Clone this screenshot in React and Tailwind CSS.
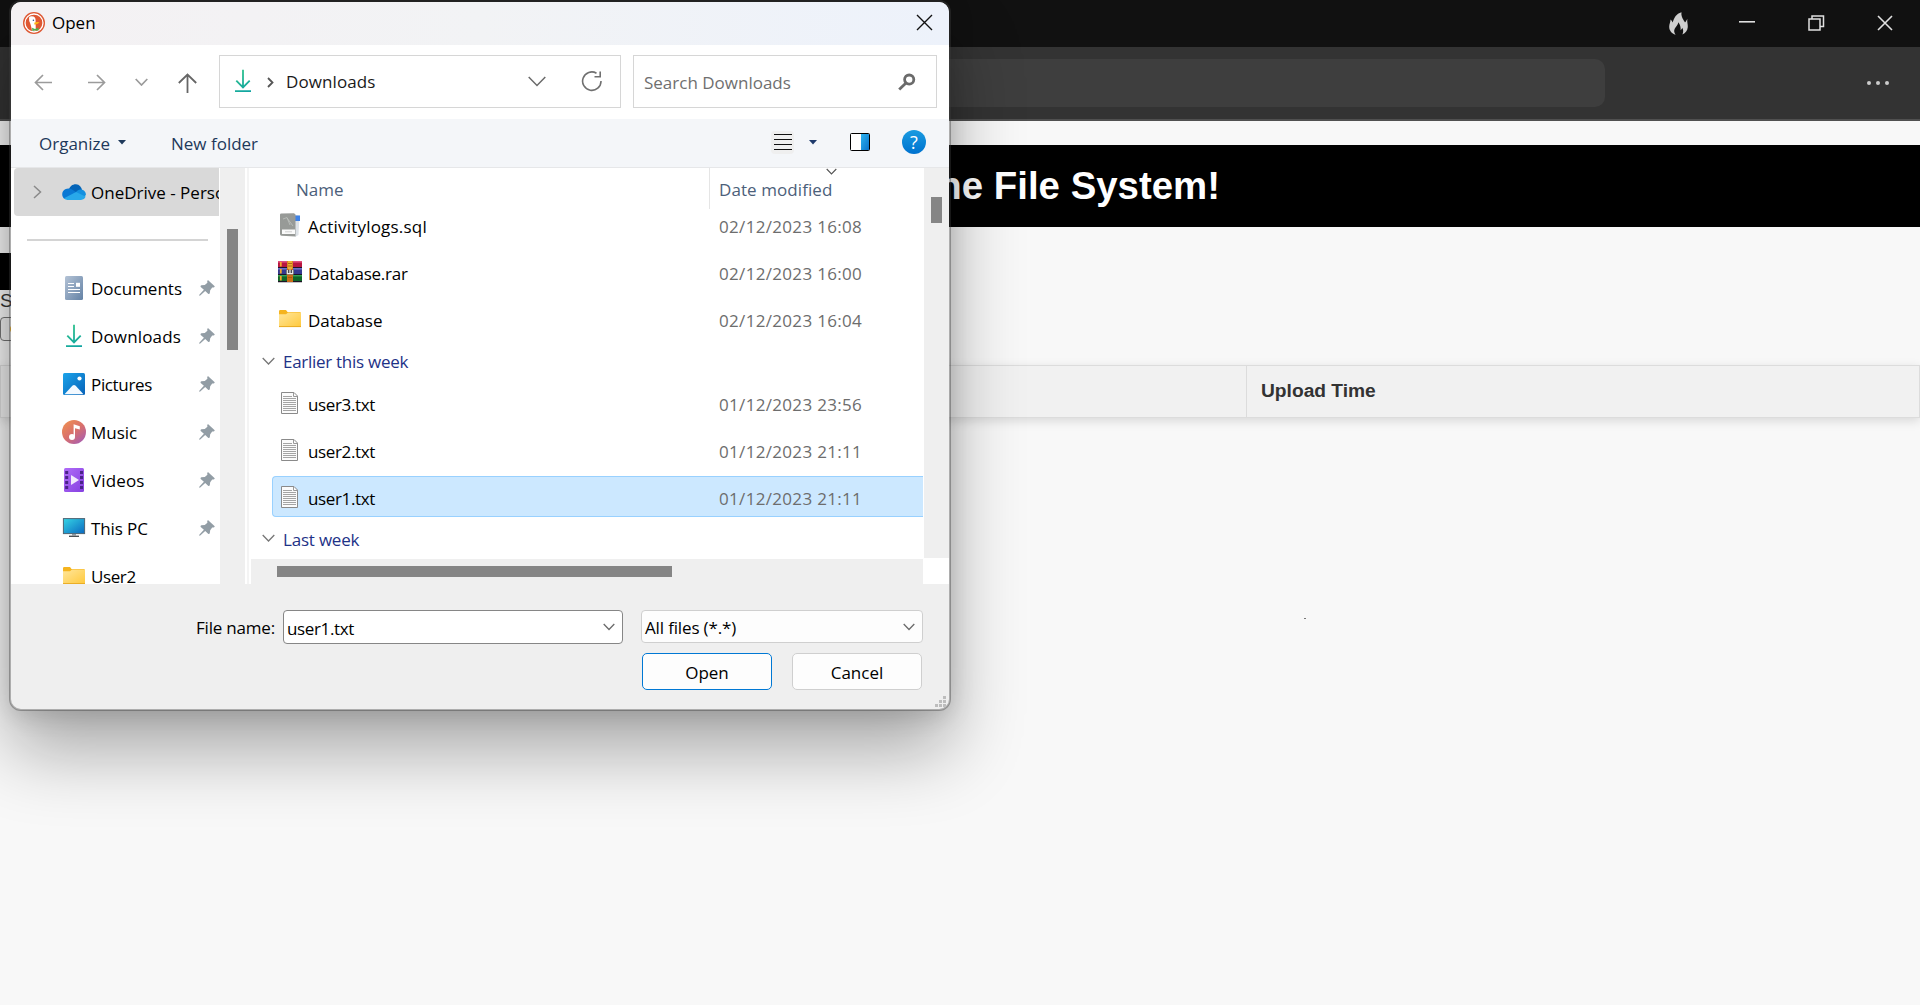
import React from "react";

const UI = "font-['Open_Sans','Noto_Sans',sans-serif]";

function Chevron({ w = 12, color = "#6b6b6b", sw = 1.3 }) {
  return (
    <svg width={w} height={w / 2 + 2} viewBox={`0 0 ${w} ${w / 2 + 2}`} fill="none" stroke={color} strokeWidth={sw}>
      <path d={`M.7 1 L${w / 2} ${w / 2 + 0.5} L${w - 0.7} 1`} />
    </svg>
  );
}

function DownloadIcon() {
  return (
    <svg width="24" height="24" viewBox="0 0 24 24" fill="none" strokeWidth="1.8">
      <defs>
        <linearGradient id="dl" gradientUnits="userSpaceOnUse" x1="6" y1="0" x2="18" y2="24">
          <stop offset="0" stopColor="#31c48a" />
          <stop offset="1" stopColor="#0fa3a3" />
        </linearGradient>
      </defs>
      <path d="M12 .8V18M5.3 11.7 12 18.4 18.7 11.7M4 22.2H20" stroke="url(#dl)" />
    </svg>
  );
}

function CloudIcon() {
  return (
    <svg width="24" height="24" viewBox="0 0 24 24">
      <path d="M6.5 10.5C7.5 6 11 4 14 4.2 17.5 4.5 19.5 7 20 10L15 15 7 12Z" fill="#0364b8" />
      <path d="M.3 15.2C-.2 11.5 2.5 8.7 6.2 8.6 8.5 8.6 10.5 9.7 14 12L8 18.5 2.5 18.8C1.3 18 .5 16.8.3 15.2Z" fill="#0a78d4" />
      <path d="M14 12C16 9.6 19 9.3 20.3 9.7 22.7 10.5 24 12.7 23.9 15L21 18 13.5 14Z" fill="#1490df" />
      <path d="M2 18.3 14 12 23.6 16.6C22.8 18.8 21.3 19.9 19 19.9H5.6C4.2 19.9 2.8 19.3 2 18.3Z" fill="#28a8ea" />
    </svg>
  );
}

function DocumentsIcon() {
  return (
    <svg width="24" height="24" viewBox="0 0 24 24">
      <defs>
        <linearGradient id="doc" x1="0" y1="0" x2="1" y2="1">
          <stop offset="0" stopColor="#b4c3d6" />
          <stop offset="1" stopColor="#6482a5" />
        </linearGradient>
      </defs>
      <rect x="3" y="0" width="18" height="24" rx="1.5" fill="url(#doc)" />
      <path d="M6 7.5H12M6 10.5H12M6 13.5H18M6 16.5H18" stroke="#fff" strokeWidth="1.1" />
      <rect x="14" y="6.8" width="4" height="4" fill="#fff" />
    </svg>
  );
}

function PicturesIcon() {
  return (
    <svg width="24" height="24" viewBox="0 0 24 24">
      <defs>
        <linearGradient id="pic" x1="0" y1="0" x2="1" y2="1">
          <stop offset="0" stopColor="#1ba4ea" />
          <stop offset="1" stopColor="#0762b8" />
        </linearGradient>
      </defs>
      <rect x="1" y="1" width="22" height="22" rx="1.5" fill="url(#pic)" />
      <path d="M2.5 22.2 10.6 13.6Q12 12.2 13.4 13.6L21.5 22.2Z" fill="#f3f9ff" />
      <circle cx="17.5" cy="6.5" r="2.1" fill="#fff" />
    </svg>
  );
}

function MusicIcon() {
  return (
    <svg width="24" height="24" viewBox="0 0 24 24">
      <defs>
        <linearGradient id="mus" x1="0.1" y1="0" x2="0.9" y2="1">
          <stop offset="0" stopColor="#f09050" />
          <stop offset="0.5" stopColor="#d9706c" />
          <stop offset="1" stopColor="#a35cb8" />
        </linearGradient>
      </defs>
      <circle cx="12" cy="12" r="12" fill="url(#mus)" />
      <circle cx="10" cy="17" r="3" fill="#fff" />
      <path d="M11.6 17V4.2L17.8 6.2V9.4L13 8.2V17Z" fill="#fff" />
    </svg>
  );
}

function VideosIcon() {
  return (
    <svg width="24" height="24" viewBox="0 0 24 24">
      <defs>
        <linearGradient id="vid" x1="0" y1="0" x2="1" y2="1">
          <stop offset="0" stopColor="#b06cf8" />
          <stop offset="1" stopColor="#8540e0" />
        </linearGradient>
      </defs>
      <rect x="2" y="0" width="20" height="24" rx="1.5" fill="url(#vid)" />
      {[3, 8, 13, 18].map((y) => (
        <g key={y} fill="#4a2488">
          <rect x="3.2" y={y} width="3" height="3" />
          <rect x="18" y={y} width="3" height="3" />
        </g>
      ))}
      <path d="M9 7 17 12 9 17Z" fill="#f2eafc" />
    </svg>
  );
}

function PcIcon() {
  return (
    <svg width="24" height="24" viewBox="0 0 24 24">
      <defs>
        <linearGradient id="pc" x1="0" y1="0" x2="1" y2="1">
          <stop offset="0" stopColor="#35d5e5" />
          <stop offset="1" stopColor="#0a68c0" />
        </linearGradient>
      </defs>
      <rect x="1.4" y="2.6" width="21.2" height="15" fill="url(#pc)" stroke="#4d6473" />
      <path d="M10 18H14V19.5H10Z" fill="#8d9aa3" />
      <path d="M7 20.3H17" stroke="#4a4f54" strokeWidth="1.4" />
    </svg>
  );
}

function FolderIcon() {
  return (
    <svg width="24" height="24" viewBox="0 0 24 24">
      <defs>
        <linearGradient id="fold" x1="0" y1="0" x2="1" y2="1">
          <stop offset="0" stopColor="#ffe69b" />
          <stop offset="1" stopColor="#ffc93c" />
        </linearGradient>
      </defs>
      <path d="M1 4.2Q1 3 2.2 3H8L9.5 5H22.5V8H1Z" fill="#f5b41e" />
      <path d="M1 7.2H8L10 5.6H23V20H1Z" fill="url(#fold)" />
      <path d="M1 19.6H23" stroke="#e9ab22" />
    </svg>
  );
}

function SqlIcon() {
  return (
    <svg width="24" height="24" viewBox="0 0 24 24">
      <path d="M15 1.5 21.5 2.5 20.5 22 17 24Z" fill="#dde2e7" />
      <path d="M17 2.5H22V8H17Z" fill="#3f83e8" />
      <path d="M2 1.8Q2 .6 3.2.5L16 .2 17.5 1.5V23.5L3.5 22.8Q2 22.6 2 21Z" fill="#979a97" />
      <path d="M5 6 9 4.5 12 12M9 5 15 13" stroke="#c3c7c3" strokeWidth=".7" fill="none" />
      <rect x="4" y="16.5" width="13" height="4.5" fill="#fafafa" />
      <path d="M7 18.8H14" stroke="#ccc" strokeWidth=".9" />
    </svg>
  );
}

function RarIcon() {
  return (
    <svg width="24" height="24" viewBox="0 0 24 24">
      <rect y="1" width="24" height="7" fill="#b81440" />
      <rect y="1" width="24" height="1.6" fill="#e0507c" />
      <rect y="8" width="24" height="7" fill="#343990" />
      <rect y="8" width="24" height="1.6" fill="#6b70c8" />
      <rect y="15" width="24" height="7" fill="#0f6628" />
      <rect y="15" width="24" height="1.4" fill="#37a355" />
      <path d="M0 7.5H24M0 14.5H24M0 21.6H24" stroke="#1d1426" strokeWidth="1.1" />
      <path d="M2.8 2V6.5M2.8 9V13.5M2.8 16V20.5" stroke="#f2a72c" strokeWidth="1.8" />
      <rect x="9" y="1" width="6" height="21" fill="#c96c16" />
      <rect x="9.6" y="1" width="4.8" height="8" fill="#eeb032" />
      <path d="M10 3.5H14M10 6H14M10 17.5H14" stroke="#a0520f" strokeWidth=".8" />
      <rect x="8" y="10" width="8" height="4.6" fill="#4c4a4a" />
      <path d="M9.3 10V13.6H14.7V10M12 9.5V13" stroke="#eee" strokeWidth="1.2" fill="none" />
    </svg>
  );
}

function TxtIcon() {
  return (
    <svg width="24" height="24" viewBox="0 0 24 24">
      <path d="M3.5 1.5H16L19.5 5V22.5H3.5Z" fill="#fbfbfb" stroke="#8a8a8a" />
      <path d="M15.5 1.5V5.5H19.5" fill="none" stroke="#9a9a9a" />
      <path d="M5 5.5H14M5 7.5H18M5 9.5H18M5 11.5H18M5 13.5H18M5 15.5H18M5 17.5H18M5 19.5H18" stroke="#a4a4a4" />
    </svg>
  );
}

function PinIcon() {
  return (
    <svg width="16" height="16" viewBox="0 0 16 16" fill="#929da5">
      <path d="M9.2.3 15.7 6.3Q15.8 7.4 14.6 7.5L13.2 7.4 11.2 10.2 10.8 13.3Q10.2 14.6 9.1 13.8L6.2 11 1.2 15.6.2 15.8.3 14.7 4.9 9.8 1.7 6.9Q1 5.8 2.3 5.2L5.8 4.9 8.4 2.7 8.2 1.2Q8.3.2 9.2.3Z" />
    </svg>
  );
}

function DuckIcon() {
  return (
    <svg width="22" height="22" viewBox="0 0 22 22">
      <circle cx="11" cy="11" r="11" fill="#de5833" />
      <circle cx="11" cy="11" r="9" fill="none" stroke="#fff" strokeWidth="1.3" />
      <path d="M6 5.5Q7.5 3.5 10.5 4.6 13 5.5 12.6 10L12.8 18.6Q11 19.4 9 18.6 7.8 12 6.2 9Z" fill="#fff" />
      <path d="M11.2 10.8Q13.5 9.5 16.6 10.2 15.5 12 11.6 12.8Z" fill="#fdb515" />
      <path d="M9 15.8 12 17 15.5 15.8V18.4L12 18.4 9.4 19Z" fill="#4caf50" />
      <circle cx="10.4" cy="8.2" r=".8" fill="#2d4f8e" />
    </svg>
  );
}

const pinned = [
  ["Documents", DocumentsIcon, "tracking-normal"],
  ["Downloads", DownloadIcon, "tracking-[0.15px]"],
  ["Pictures", PicturesIcon, "tracking-[-0.35px]"],
  ["Music", MusicIcon, "tracking-normal"],
  ["Videos", VideosIcon, "tracking-[0.15px]"],
  ["This PC", PcIcon, "tracking-[-0.1px]"],
];

function FileRow({ icon: Icon, name, date, selected, tracking, shift }) {
  return (
    <div className="flex h-[47px] items-center pl-[23px]">
      <div
        className={
          "flex h-[41px] w-[651px] items-center rounded-l-sm border border-r-0 " +
          (selected ? "border-[#99d1ff] bg-[#cce8ff]" : "border-transparent")
        }
      >
        <div className={"flex items-center " + shift}>
          <div className="ml-[5px] h-6 w-6 -translate-y-[2px]"><Icon /></div>
          <div className={"ml-[6px] w-[411px] text-black " + tracking}>{name}</div>
          <div className="tracking-[0.32px] text-[#6d6d6d]">{date}</div>
        </div>
      </div>
    </div>
  );
}

function Group({ label, className }) {
  return (
    <div className={"flex items-center pl-[13px] text-[#1e3287] " + className}>
      <div className="-mt-[2px]"><Chevron w={13} color="#767676" /></div>
      <span className="ml-2">{label}</span>
    </div>
  );
}

function Dialog() {
  return (
    <div
      className={
        UI +
        " absolute left-[9px] top-0 flex h-[711px] w-[942px] flex-col overflow-hidden whitespace-nowrap rounded-[12px] border-2 border-[#3c3c3c]/40 bg-[#efefef] bg-clip-padding text-[17px] leading-6 shadow-[0_40px_72px_rgba(0,0,0,0.32),0_4px_24px_rgba(0,0,0,0.14)]"
      }
    >
      <div className="flex h-[43px] shrink-0 items-center bg-linear-to-r from-[#f4f1f3] via-[#f2f3f5] to-[#edf2fb] pb-[2px] pl-3 pr-4">
        <DuckIcon />
        <span className="ml-[7px] text-black">Open</span>
        <svg className="ml-auto" width="17" height="17" viewBox="0 0 17 17" stroke="#111" strokeWidth="1.4">
          <path d="M1 1 16 16M16 1 1 16" />
        </svg>
      </div>

      <div className="flex h-[74px] shrink-0 items-center bg-white">
        <svg className="ml-[23px]" width="18" height="17" viewBox="0 0 18 17" fill="none" stroke="#9b9b9b" strokeWidth="1.7">
          <path d="M18 8.5H1.5M9 1 1.5 8.5 9 16" />
        </svg>
        <svg className="ml-[36px]" width="18" height="17" viewBox="0 0 18 17" fill="none" stroke="#9b9b9b" strokeWidth="1.7">
          <path d="M0 8.5H16.5M9 1 16.5 8.5 9 16" />
        </svg>
        <div className="ml-[29px]"><Chevron w={13} color="#9b9b9b" sw={1.7} /></div>
        <svg className="ml-[30px] mt-[2px]" width="19" height="20" viewBox="0 0 19 20" fill="none" stroke="#666" strokeWidth="1.8">
          <path d="M9.5 20V1.5M.8 10 9.5 1.5 18.2 10" />
        </svg>
        <div className="ml-[22px] flex h-[53px] w-[402px] -translate-y-[1px] items-center border border-[#d6d6d6]">
          <div className="ml-[11px]"><DownloadIcon /></div>
          <svg className="ml-[12px] mt-[3px]" width="8" height="11" viewBox="0 0 8 11" fill="none" stroke="#555" strokeWidth="1.8">
            <path d="M1 1 5.5 5.5 1 10" />
          </svg>
          <span className="ml-[11px] w-[242px] pt-[2px] tracking-[0.1px] text-[#1a1a1a]">Downloads</span>
          <Chevron w={18} color="#6b6b6b" sw={1.5} />
          <svg className="ml-[35px]" width="22" height="22" viewBox="0 0 22 22" fill="none" stroke="#707070" strokeWidth="1.6">
            <path d="M15.5 3.2A9.2 9.2 0 1 0 20 11M19.2 1.5V6.8H13.5" />
          </svg>
        </div>
        <div className="ml-3 flex h-[53px] w-[304px] -translate-y-[1px] items-center border border-[#d6d6d6] pl-[10px]">
          <span className="pt-[3px] text-[#6f6f6f]">Search Downloads</span>
          <svg className="ml-auto mr-[20px] mt-[2px]" width="18" height="18" viewBox="0 0 18 18" fill="none" stroke="#6b6b6b">
            <circle cx="11.2" cy="6.6" r="4.6" strokeWidth="2.8" />
            <path d="M8 10 1.2 16.6" strokeWidth="2.8" />
          </svg>
        </div>
      </div>

      <div className="flex h-[49px] shrink-0 items-center border-b border-[#e6e7e9] bg-[#f4f6f9] text-[#1e395b]">
        <span className="ml-[28px] w-[71px] pt-[2px]">Organize</span>
        <svg className="-mt-[2px] ml-[8px]" width="8" height="5" viewBox="0 0 8 5" fill="#1e395b"><path d="M0 0H8L4 4.6Z" /></svg>
        <span className="ml-[45px] w-[88px] pt-[2px]">New folder</span>
        <div className="-mt-[2px] ml-[512px] flex h-[23px] w-[23px] items-center justify-center rounded bg-[#efefef]">
          <svg width="18" height="16" viewBox="0 0 18 16" stroke="#111"><path d="M0 .5H18M0 5.5H18M0 10.5H18M0 15.5H18" /></svg>
        </div>
        <svg className="-mt-[2px] ml-[15px]" width="8" height="5" viewBox="0 0 8 5" fill="#1e3a6b"><path d="M0 0H8L4 4.6Z" /></svg>
        <svg className="-mt-[2px] ml-[33px]" width="20" height="18" viewBox="0 0 20 18">
          <defs>
            <linearGradient id="pane" x1="0" y1="0" x2="1" y2="1">
              <stop offset="0" stopColor="#2cb4f0" /><stop offset="1" stopColor="#0a72cc" />
            </linearGradient>
          </defs>
          <rect x=".5" y=".5" width="19" height="17" rx="1" fill="#fff" stroke="#000" />
          <rect x="11" y="1" width="8" height="16" fill="url(#pane)" />
        </svg>
        <div className="-mt-[2px] ml-[32px] flex h-6 w-6 items-center justify-center rounded-full bg-linear-to-b from-[#1b9be0] to-[#0072cf] text-[18px] text-white">?</div>
      </div>

      <div className="flex h-[416px] shrink-0 overflow-hidden bg-white text-black">
        <div className="h-full w-[209px] overflow-hidden">
          <div className="ml-[3px] flex h-12 w-[205px] items-center overflow-hidden rounded-l-sm bg-[#d9d9d9]">
            <svg className="ml-[19px] shrink-0" width="9" height="14" viewBox="0 0 9 14" fill="none" stroke="#8a8a8a" strokeWidth="1.5">
              <path d="M1 1 7.5 7 1 13" />
            </svg>
            <div className="ml-[20px] shrink-0"><CloudIcon /></div>
            <span className="ml-[5px] pt-[2px]">OneDrive - Personal</span>
          </div>
          <div className="flex h-12 items-center pl-[16px]"><div className="h-[2px] w-[181px] bg-[#d4d4d4]" /></div>
          {pinned.map(([name, Icon, tracking]) => (
            <div key={name} className="flex h-12 items-center pl-[51px]">
              <Icon />
              <span className={"ml-[5px] w-[108px] pt-[2px] " + tracking}>{name}</span>
              <PinIcon />
            </div>
          ))}
          <div className="flex h-12 items-center pl-[51px]">
            <FolderIcon />
            <span className="ml-[5px] pt-[2px] tracking-[-0.4px]">User2</span>
          </div>
        </div>
        <div className="w-[25px] bg-[#efefef] pl-[7px] pt-[61px]"><div className="h-[121px] w-[11px] bg-[#858585]" /></div>
        <div className="ml-[2px] w-[2px] bg-[#f4f4f4]" />
        <div className="flex w-[674px] flex-col">
          <div className="flex h-[36px] shrink-0 text-[#4c607a]">
            <div className="w-[460px] pl-[47px] pt-[10px]">Name</div>
            <div className="relative h-[41px] border-l border-[#e5e5e5] pl-[9px] pt-[10px] tracking-[0.08px]">
              Date modified
              <div className="absolute left-[116px] top-0"><Chevron w={11} color="#555" sw={1.1} /></div>
            </div>
          </div>
          <FileRow icon={SqlIcon} name="Activitylogs.sql" date="02/12/2023 16:08" tracking="tracking-[0.2px]" shift="-translate-y-px" />
          <FileRow icon={RarIcon} name="Database.rar" date="02/12/2023 16:00" tracking="tracking-[-0.25px]" shift="-translate-y-px" />
          <FileRow icon={FolderIcon} name="Database" date="02/12/2023 16:04" tracking="tracking-[-0.05px]" shift="-translate-y-px" />
          <Group label="Earlier this week" className="h-[34px] tracking-[-0.28px]" />
          <FileRow icon={TxtIcon} name="user3.txt" date="01/12/2023 23:56" tracking="tracking-[-0.35px]" shift="translate-y-[2px]" />
          <FileRow icon={TxtIcon} name="user2.txt" date="01/12/2023 21:11" tracking="tracking-[-0.35px]" shift="translate-y-[2px]" />
          <FileRow icon={TxtIcon} name="user1.txt" date="01/12/2023 21:11" tracking="tracking-[-0.35px]" shift="translate-y-[2px]" selected />
          <Group label="Last week" className="h-[39px] tracking-[-0.2px]" />
          <div className="ml-[2px] h-[25px] bg-[#efefef] pl-[26px] pt-[7px]"><div className="h-[11px] w-[395px] bg-[#858585]" /></div>
        </div>
        <div className="ml-[1px] h-[390px] w-[25px] bg-[#efefef] pl-[7px] pt-[29px]"><div className="h-[26px] w-[11px] bg-[#858585]" /></div>
      </div>

      <div className="relative h-[125px] shrink-0 text-black">
        <div className="flex pt-[26px]">
          <span className="ml-[185px] w-[87px] pt-[6px] tracking-[-0.2px]">File name:</span>
          <div className="flex h-[34px] w-[340px] items-center justify-between rounded-sm border border-[#868686] bg-white pl-[3px] pr-[7px]">
            <span className="pt-[3px] tracking-[-0.35px]">user1.txt</span>
            <Chevron w={12} />
          </div>
          <div className="ml-[18px] flex h-[33px] w-[282px] items-center justify-between rounded-sm border border-[#cfcfcf] bg-[#fdfdfd] pl-[3px] pr-[7px]">
            <span className="pt-[2px] tracking-[-0.15px]">All files (*.*)</span>
            <Chevron w={12} />
          </div>
        </div>
        <div className="ml-[631px] mt-[9px] flex gap-5">
          <div className="flex h-[37px] w-[130px] items-center justify-center rounded-[5px] border border-[#0078d4] bg-[#fdfdfd] pt-[2px]">Open</div>
          <div className="flex h-[37px] w-[130px] items-center justify-center rounded-[5px] border border-[#cfcfcf] bg-[#fdfdfd] pt-[2px]">Cancel</div>
        </div>
        <svg className="absolute bottom-[2px] right-[3px]" width="11" height="11" viewBox="0 0 11 11" fill="#bdbdbd">
          <path d="M8 0H11V3H8ZM4 4H7V7H4ZM8 4H11V7H8ZM0 8H3V11H0ZM4 8H7V11H4ZM8 8H11V11H8Z" />
        </svg>
      </div>
    </div>
  );
}

export default function App() {
  return (
    <div className="relative h-[1005px] w-[1920px] overflow-hidden bg-[#f8f8f8] font-['Liberation_Sans',sans-serif]">
      <div className="flex h-[47px] items-center justify-end bg-[#111] pr-[27px] text-[#e0e0e0]">
        <svg width="19" height="23" viewBox="0 0 19 23" fill="#cfcfcf">
          <path d="M12.5.3C12 3.5 13 5.5 14.5 8 15.3 9.4 15.8 9.8 16 10.6 17 9.5 17.6 8 18.4 7 17.8 10 19 12 18.8 15 18.6 18.6 16.5 21 13.4 22.4 14.6 20 14.4 17.6 13.2 15.8 12.8 17.2 12.2 17.6 11.6 18.2 11.9 15.4 11.2 12.4 9.2 10.2 9.2 13.6 5.4 15.5 5.2 18.8 5.1 20.4 5.7 21.5 6.6 22.8 2.6 21.5.2 18.6.2 14.8.2 12 1.6 10 1.5 7.6 2.6 8.4 3.2 9.4 3.6 10.6 5.4 5.4 7 2 12.5.3Z" />
        </svg>
        <svg className="-mt-[3px] ml-[51px]" width="16" height="2" fill="currentColor"><rect width="16" height="1.6" /></svg>
        <svg className="-mt-[2px] ml-[53px]" width="17" height="16" viewBox="0 0 17 16" fill="none" stroke="currentColor" strokeWidth="1.5">
          <path d="M1 4H12V15H1ZM4 4V1H15.5V11.5H12" />
        </svg>
        <svg className="-mt-[2px] ml-[52px]" width="16" height="16" viewBox="0 0 16 16" stroke="currentColor" strokeWidth="1.6">
          <path d="M1 1 15 15M15 1 1 15" />
        </svg>
      </div>
      <div className="flex h-[74px] items-center border-b-2 border-[#505050] bg-[#333]">
        <div className="ml-[315px] h-12 w-[1290px] rounded-[10px] bg-[#3e3e3e]" />
        <div className="ml-[262px] flex gap-[5px]">
          <div className="h-1 w-1 rounded-full bg-[#ccc]" />
          <div className="h-1 w-1 rounded-full bg-[#ccc]" />
          <div className="h-1 w-1 rounded-full bg-[#ccc]" />
        </div>
      </div>
      <div className="mt-6 flex h-[82px] items-center justify-end bg-black pr-[700px] text-[38.4px] font-bold text-white">
        the File System!
      </div>
      <div className="mt-[26px] h-[37px] w-[400px] bg-black" />
      <div className="h-[27px] w-[400px] text-[19px] leading-[21px] text-[#333]">S</div>
      <div className="flex h-6 w-[200px] items-center rounded-sm border border-[#767676] bg-[#f0f0f0] pl-[9px]">
        <div className="h-2 w-2 rounded-full bg-[#f5b41e]" />
      </div>
      <div className="mt-6 flex h-[53px] border border-[#dcdcdc] bg-[#f1f1f1] text-[19.2px] font-bold text-[#333] shadow-[0_3px_10px_rgba(0,0,0,0.13)]">
        <div className="w-[1246px] border-r border-[#dcdcdc]" />
        <div className="flex items-center pl-[14px]">Upload Time</div>
      </div>
      <div className="ml-[1304px] mt-[200px] h-px w-[2px] bg-[#777]" />
      <Dialog />
    </div>
  );
}
